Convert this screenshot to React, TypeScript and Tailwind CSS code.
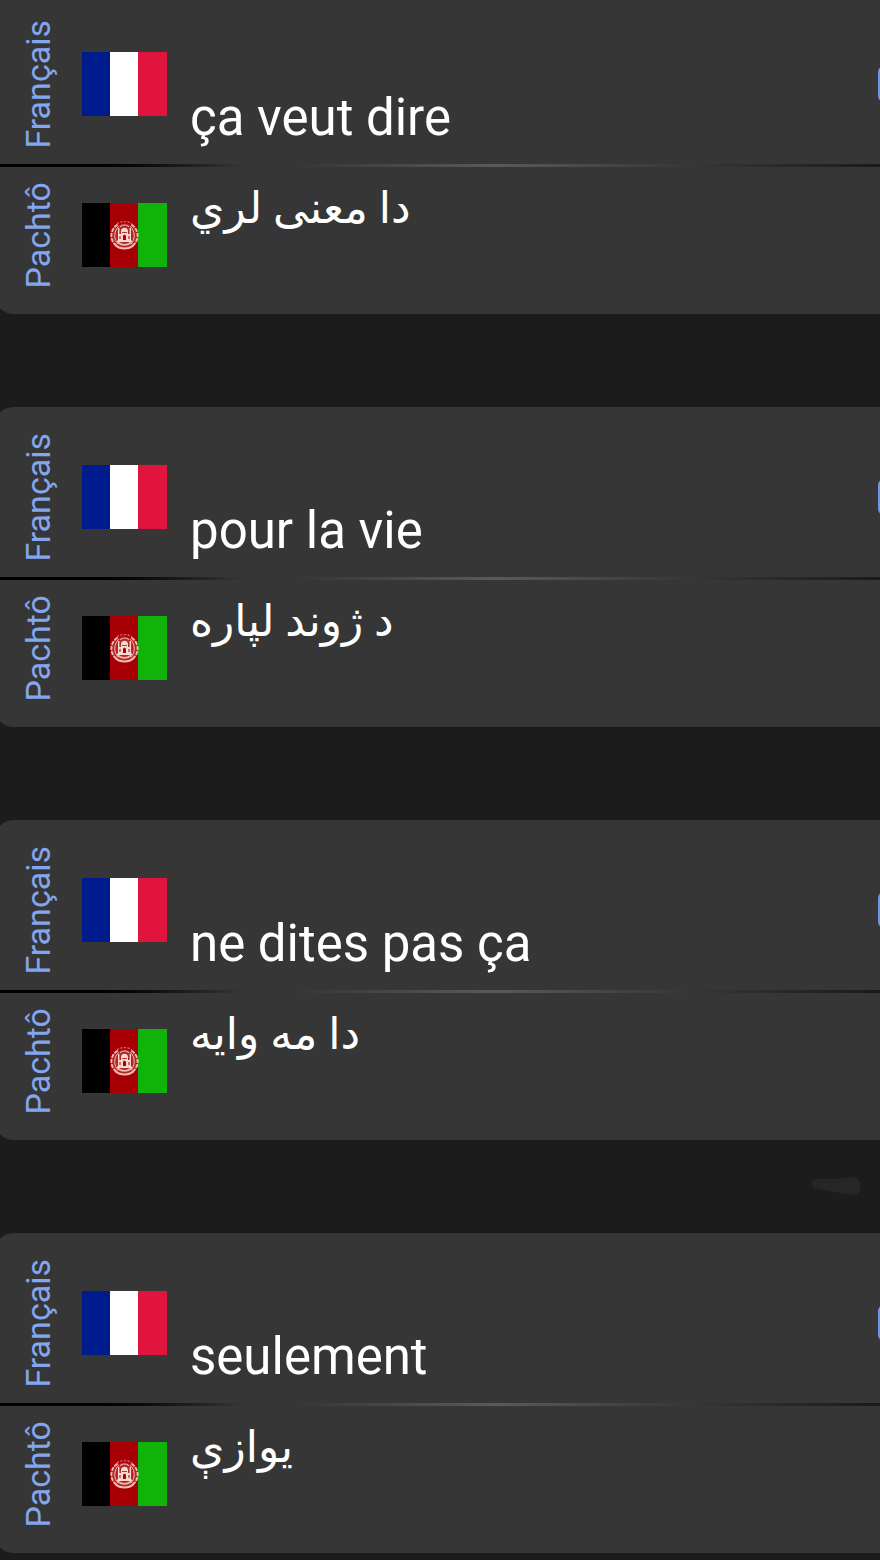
const phrases = [
    { fr: 'ça veut dire', ps: 'دا معنی لري' },
    { fr: 'pour la vie', ps: 'د ژوند لپاره' },
    { fr: 'ne dites pas ça', ps: 'دا مه وایه' },
    { fr: 'seulement', ps: 'یوازې' },
]

function FrenchFlag() {
    return (
        <svg className="w-[85px] h-16 shrink-0" viewBox="0 0 85 64" role="img" aria-label="Drapeau français">
            <rect width="29" height="64" fill="#001c8c" />
            <rect x="28" width="29" height="64" fill="#ffffff" />
            <rect x="56" width="29" height="64" fill="#e0143c" />
        </svg>
    )
}

function AfghanFlag() {
    return (
        <svg className="w-[85px] h-16 shrink-0" viewBox="0 0 85 64" role="img" aria-label="Drapeau afghan">
            <rect width="29" height="64" fill="#000000" />
            <rect x="28" width="29" height="64" fill="#a60004" />
            <rect x="56" width="29" height="64" fill="#10b30a" />
            {/* emblem */}
            <ellipse cx="42.500" cy="33" rx="12" ry="12.500" fill="#c4564f" fillOpacity=".45" />
            <g fill="none" stroke="#f0bdb4" strokeLinecap="round">
                <path d="M35 22C28 27 27.500 37 34 42.500M50 22C57 27 57.500 37 51 42.500" strokeWidth="2" strokeDasharray="2.600 2.600" />
                <path d="M36.500 23.500C31.500 28 31.500 37 36 41M48.500 23.500C53.500 28 53.500 37 49 41" strokeWidth="1" />
                <path d="M35.500 20.500C39.500 18 45.500 18 49.500 20.500" strokeWidth="1.400" strokeOpacity=".55" strokeDasharray="1.200 2.400" />
                <path d="M34 42.500C38 46.500 47 46.500 51 42.500" strokeWidth="2" />
                <path d="M36 39.500C40 42.500 45 42.500 49 39.500" strokeWidth="1.600" />
                <path d="M38.500 23.500C40 21.500 45 21.500 46.500 23.500" strokeWidth="1.200" />
            </g>
            <g fill="#f7d9d0">
                <path d="M39 28c0-4.500 7-4.500 7 0v3h3v7H36v-7h3z" />
                <rect x="36" y="25" width="1.400" height="7" />
                <rect x="47.600" y="25" width="1.400" height="7" />
                <rect x="35" y="37.500" width="15" height="1.500" />
            </g>
            <path d="M41 37v-3.500c0-2.500 3-2.500 3 0v3.500zM37.500 33h1v3h-1zM46.500 33h1v3h-1zM40 29h5v.8h-5z" fill="#a60004" />
        </svg>
    )
}

function LangLabel({ children }: { children: string }) {
    return (
        <span className="w-10 shrink-0 flex items-center justify-center [writing-mode:vertical-rl] rotate-180 text-[34px] leading-10 text-[#83a6ee]">
            {children}
        </span>
    )
}

function PhraseCard({ fr, ps }: { fr: string; ps: string }) {
    return (
        <article className="-ml-1.5 rounded-l-[20px] bg-[#363636] overflow-hidden">
            <div className="flex items-center h-[170px] pt-2.5 pl-6">
                <LangLabel>Français</LangLabel>
                <div className="ml-6">
                    <FrenchFlag />
                </div>
                <p lang="fr" className="ml-[23px] mb-[18px] flex-1 self-end text-[51px] leading-[56px] text-white">{fr}</p>
                <button type="button" aria-label="Écouter" className="w-10 h-9 -mr-[38px] shrink-0 rounded-md border-2 border-[#7095e6]" />
            </div>
            <div className="h-[3px] bg-linear-to-r from-black from-8% via-[#363636] via-28% to-[#363636] to-38%">
                <div className="ml-[34%] h-full bg-[linear-gradient(to_right,#363636,#5a5a5a_34%,#363636_68%,#1a1a1a)]" />
            </div>
            <div className="flex items-center h-[147px] pb-[11px] pl-6">
                <LangLabel>Pachtô</LangLabel>
                <div className="ml-6">
                    <AfghanFlag />
                </div>
                <p lang="ps" dir="rtl" className="ml-[23px] mt-[13px] flex-1 self-start text-left text-[44px] leading-[56px] text-white">{ps}</p>
            </div>
        </article>
    )
}

export default function App() {
    return (
        <div className="bg-[#1c1c1c] overflow-hidden font-['Roboto','Noto_Sans','DejaVu_Sans',sans-serif]">
            <main className="relative -mt-1.5 mb-[7px] flex flex-col gap-[93px]">
                {phrases.map(p => (
                    <PhraseCard key={p.fr} fr={p.fr} ps={p.ps} />
                ))}
                {/* touch trace */}
                <svg className="absolute right-[18px] top-[1182px] w-[52px] h-5" viewBox="0 0 52 20" aria-hidden="true">
                    <path d="M1 6C2 2 12 3 26 3L44 1C53 3 53 18 44 19L24 16C12 13 2 14 1 6z" fill="#262626" />
                </svg>
            </main>
        </div>
    )
}
